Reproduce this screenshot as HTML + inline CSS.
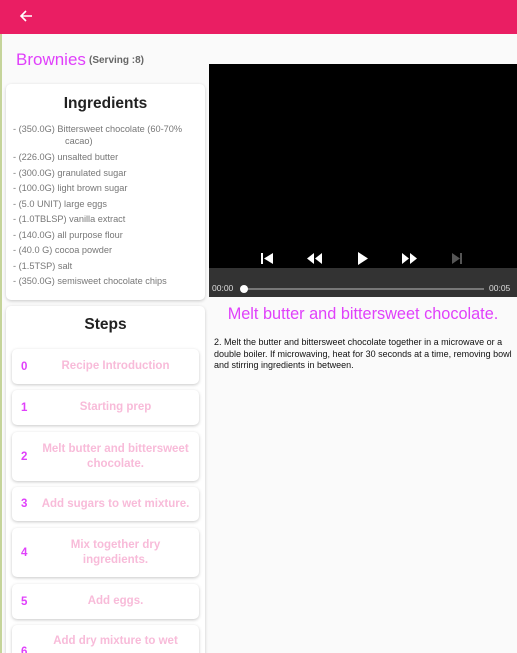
<!DOCTYPE html>
<html><head><style>
*{box-sizing:border-box;margin:0;padding:0}
html,body{width:517px;height:653px;overflow:hidden}
body{background:#fafafa;font-family:"Liberation Sans",sans-serif;position:relative}
.bar{position:absolute;left:0;top:0;width:517px;height:34px;background:#ea1e63}
.lline{position:absolute;left:0;top:34px;width:2px;height:619px;background:#c5d49a}
.title{position:absolute;left:16px;top:50px;font-size:17px;color:#e040fb}
.serv{position:absolute;left:89px;top:55px;font-size:10px;font-weight:bold;color:#666}
.card{position:absolute;left:6px;width:199px;background:#fff;border-radius:5px;box-shadow:0 1px 3px rgba(0,0,0,.2)}
.card h2{text-align:center;font-size:15.5px;font-weight:bold;color:#222}
.ing{font-size:9.2px;color:#777;line-height:15.5px;padding-left:7px}
.step{position:absolute;left:12px;width:187px;background:#fff;border-radius:5px;box-shadow:0 1px 3px rgba(0,0,0,.22);display:flex;align-items:center}
.step .n{width:24px;padding-left:9px;color:#e040fb;font-weight:bold;font-size:11.5px}
.step .t{flex:1;text-align:center;color:#f8bbd9;font-weight:bold;font-size:11.5px;line-height:15px;padding-right:4px}
.video{position:absolute;left:209px;top:64px;width:308px;height:233px;background:#000}
.ctrl{position:absolute;left:0;top:204px;width:308px;height:29px;background:#333}
.h3{position:absolute;left:209px;top:305px;width:308px;text-align:center;font-size:16.3px;color:#e040fb}
.desc{position:absolute;left:214px;top:337px;width:300px;font-size:9px;line-height:11.5px;color:#111}
</style></head><body>
<div class="bar"><svg style="position:absolute;left:19px;top:9px" width="14" height="14" viewBox="0 0 14 14"><path d="M13 7H2M7 2L2 7l5 5" stroke="#fff" stroke-width="1.6" fill="none"/></svg></div>
<div class="lline"></div>
<div class="title">Brownies</div><div class="serv">(Serving :8)</div>
<div class="card" style="top:84px;height:216px"><h2 style="padding-top:11px">Ingredients</h2>
<div class="ing" style="margin-top:11px">
<div style="line-height:11.5px;margin:2px 0 3px">- (350.0G) Bittersweet chocolate (60-70%<br><span style="padding-left:52px">cacao)</span></div>
<div>- (226.0G) unsalted butter</div><div>- (300.0G) granulated sugar</div><div>- (100.0G) light brown sugar</div><div>- (5.0 UNIT) large eggs</div><div>- (1.0TBLSP) vanilla extract</div><div>- (140.0G) all purpose flour</div><div>- (40.0 G) cocoa powder</div><div>- (1.5TSP) salt</div><div>- (350.0G) semisweet chocolate chips</div></div></div>
<div class="card" style="top:306px;height:360px"><h2 style="padding-top:10px">Steps</h2></div>
<div class="step" style="top:349px;height:35px"><span class="n">0</span><span class="t">Recipe Introduction</span></div>
<div class="step" style="top:390px;height:35px"><span class="n">1</span><span class="t">Starting prep</span></div>
<div class="step" style="top:432px;height:49px"><span class="n">2</span><span class="t">Melt butter and bittersweet chocolate.</span></div>
<div class="step" style="top:487px;height:34px"><span class="n">3</span><span class="t" style="white-space:nowrap">Add sugars to wet mixture.</span></div>
<div class="step" style="top:528px;height:49px"><span class="n">4</span><span class="t">Mix together dry<br>ingredients.</span></div>
<div class="step" style="top:584px;height:35px"><span class="n">5</span><span class="t">Add eggs.</span></div>
<div class="step" style="top:625px;height:49px;align-items:flex-start;padding-top:9px"><span class="n" style="padding-top:12px">6</span><span class="t">Add dry mixture to wet</span></div>
<div class="video">
<svg style="position:absolute;left:0;top:184px" width="308" height="20" viewBox="0 0 308 20">
<rect x="52" y="5" width="2" height="11" fill="#fff"/><path d="M64 5v11l-9-5.5z" fill="#fff"/>
<path d="M105 5v11l-7-5.5zM113 5v11l-7-5.5z" fill="#fff"/>
<path d="M149 4v13l10-6.5z" fill="#fff"/>
<path d="M193 5v11l7-5.5zM201 5v11l7-5.5z" fill="#fff"/>
<path d="M243 5v11l8-5.5z" fill="#555"/><rect x="251" y="5" width="2" height="11" fill="#555"/>
</svg>
<div class="ctrl">
<span style="position:absolute;left:3px;top:15px;font-size:8.5px;color:#ddd">00:00</span>
<div style="position:absolute;left:37px;top:20px;width:238px;height:2px;background:#777"></div>
<div style="position:absolute;left:31px;top:17px;width:8px;height:8px;border-radius:50%;background:#fff"></div>
<span style="position:absolute;left:280px;top:15px;font-size:8.5px;color:#ddd">00:05</span>
</div></div>
<div class="h3">Melt butter and bittersweet chocolate.</div>
<div class="desc">2. Melt the butter and bittersweet chocolate together in a microwave or a double boiler. If microwaving, heat for 30 seconds at a time, removing bowl and stirring ingredients in between.</div>
</body></html>
